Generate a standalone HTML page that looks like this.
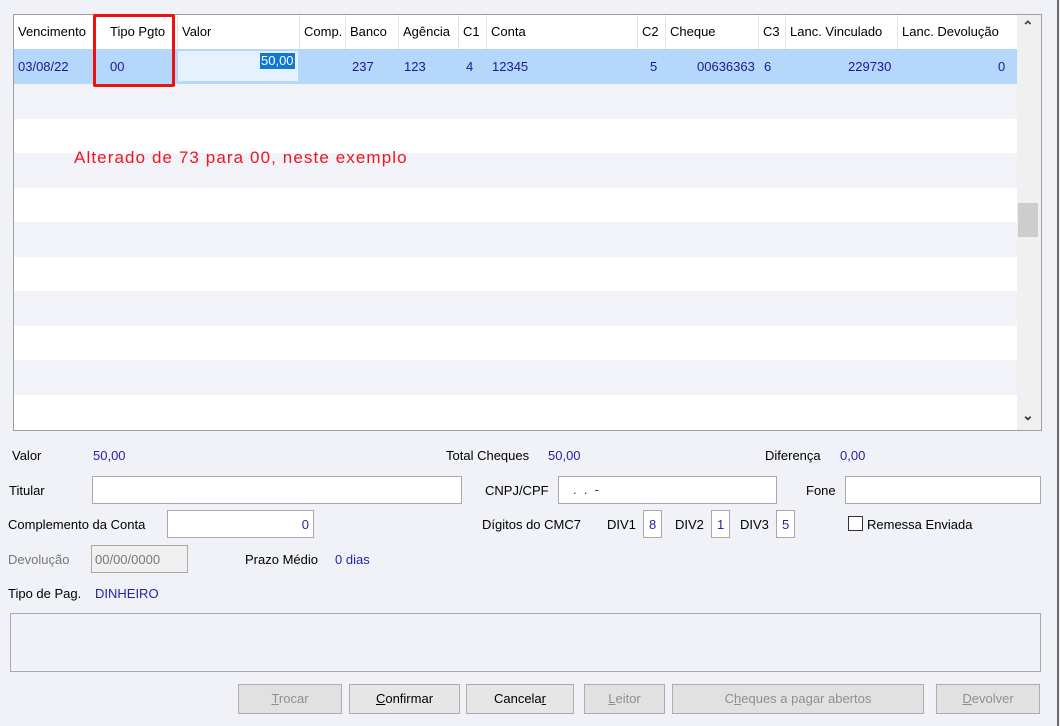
<!DOCTYPE html>
<html><head><meta charset="utf-8"><style>
*{box-sizing:border-box;margin:0;padding:0}
body{width:1060px;height:726px;background:#f0f2f7;font-family:"Liberation Sans",sans-serif;font-size:13px;color:#000;position:relative;overflow:hidden}
.a{position:absolute;white-space:nowrap}
.grid{position:absolute;left:13px;top:14px;width:1029px;height:417px;border:1px solid #a0a0a0;background:#fff;overflow:hidden}
.hd{position:absolute;top:0;height:34px;line-height:34px;border-right:1px solid #e3e3e3;padding-left:4px}
.row{position:absolute;left:0;width:1003px;height:35px}
.c{position:absolute;top:0;line-height:35px;color:#1a1a8c}
.blue{color:#2323a8}
.inp{position:absolute;background:#fff;border:1px solid #a8a8a8;height:28px}
.btn{position:absolute;top:684px;height:30px;border:1px solid #adadad;background:#e1e1e1;text-align:center;line-height:28px;color:#8f8f8f}
.btn.on{color:#000;background:#e6e6e6}
u{text-decoration:underline}
</style></head><body>
<div class="grid">
  <div class="hd" style="left:0;width:80px">Vencimento</div>
  <div class="hd" style="left:80px;width:84px;padding-left:16px">Tipo Pgto</div>
  <div class="hd" style="left:164px;width:122px">Valor</div>
  <div class="hd" style="left:286px;width:46px">Comp.</div>
  <div class="hd" style="left:332px;width:53px">Banco</div>
  <div class="hd" style="left:385px;width:60px">Agência</div>
  <div class="hd" style="left:445px;width:28px">C1</div>
  <div class="hd" style="left:473px;width:151px">Conta</div>
  <div class="hd" style="left:624px;width:28px">C2</div>
  <div class="hd" style="left:652px;width:93px">Cheque</div>
  <div class="hd" style="left:745px;width:27px">C3</div>
  <div class="hd" style="left:772px;width:112px">Lanc. Vinculado</div>
  <div class="hd" style="left:884px;width:120px">Lanc. Devolução</div>
  <div class="row" style="top:34px;background:#b5d7fb">
    <div class="c" style="left:4px">03/08/22</div>
    <div class="c" style="left:96px">00</div>
    <div style="position:absolute;left:164px;top:2px;width:120px;height:30px;background:#e5f1fd"></div>
    <div style="position:absolute;left:246px;top:4px;height:16px;line-height:16px;background:#0f78d7;color:#fff;padding:0 1px">50,00</div>
    <div class="c" style="left:338px">237</div>
    <div class="c" style="left:390px">123</div>
    <div class="c" style="left:452px">4</div>
    <div class="c" style="left:478px">12345</div>
    <div class="c" style="left:636px">5</div>
    <div class="c" style="left:683px">00636363</div>
    <div class="c" style="left:750px">6</div>
    <div class="c" style="left:834px">229730</div>
    <div class="c" style="left:984px">0</div>
  </div>
  <div class="row" style="top:69px;background:#f2f3f8"></div>
  <div class="row" style="top:138px;background:#f2f3f8"></div>
  <div class="row" style="top:207px;background:#f2f3f8"></div>
  <div class="row" style="top:276px;background:#f2f3f8"></div>
  <div class="row" style="top:345px;background:#f2f3f8"></div>
  <div class="a" style="left:60px;top:133px;color:#f0141e;font-size:17px;letter-spacing:1.1px">Alterado de 73 para 00, neste exemplo</div>
  <div style="position:absolute;left:1003px;top:0;width:24px;height:415px;background:#f0f0f0">
    <div class="a" style="left:5px;top:3px;font-size:14px;font-weight:bold;color:#444">&#8963;</div>
    <div style="position:absolute;left:1px;top:188px;width:20px;height:34px;background:#cdcdcd"></div>
    <div class="a" style="left:5px;top:392px;font-size:14px;font-weight:bold;color:#333">&#8964;</div>
  </div>
</div>
<div style="position:absolute;left:93px;top:14px;width:82px;height:73px;border:3px solid #ee1111;border-radius:2px"></div>
<div style="position:absolute;left:1057px;top:0;width:2px;height:726px;background:#6a6a6a"></div>

<div class="a" style="left:12px;top:448px">Valor</div>
<div class="a blue" style="left:93px;top:448px">50,00</div>
<div class="a" style="left:446px;top:448px">Total Cheques</div>
<div class="a blue" style="left:548px;top:448px">50,00</div>
<div class="a" style="left:765px;top:448px">Diferença</div>
<div class="a blue" style="left:840px;top:448px">0,00</div>

<div class="a" style="left:9px;top:483px">Titular</div>
<div class="inp" style="left:92px;top:476px;width:370px"></div>
<div class="a" style="left:485px;top:483px">CNPJ/CPF</div>
<div class="inp" style="left:558px;top:476px;width:219px"><span class="a blue" style="left:14px;top:5px">. &nbsp;. &nbsp;-</span></div>
<div class="a" style="left:806px;top:483px">Fone</div>
<div class="inp" style="left:845px;top:476px;width:196px"></div>

<div class="a" style="left:8px;top:517px">Complemento da Conta</div>
<div class="inp" style="left:167px;top:510px;width:147px"><span class="a blue" style="right:4px;top:6px">0</span></div>
<div class="a" style="left:482px;top:517px">Dígitos do CMC7</div>
<div class="a" style="left:607px;top:517px">DIV1</div>
<div class="inp" style="left:643px;top:510px;width:19px"><span class="a blue" style="left:5px;top:6px">8</span></div>
<div class="a" style="left:675px;top:517px">DIV2</div>
<div class="inp" style="left:711px;top:510px;width:19px"><span class="a blue" style="left:5px;top:6px">1</span></div>
<div class="a" style="left:740px;top:517px">DIV3</div>
<div class="inp" style="left:776px;top:510px;width:19px"><span class="a blue" style="left:5px;top:6px">5</span></div>
<div style="position:absolute;left:848px;top:516px;width:15px;height:15px;border:1px solid #333;background:#fff"></div>
<div class="a" style="left:867px;top:517px">Remessa Enviada</div>

<div class="a" style="left:8px;top:552px;color:#777">Devolução</div>
<div class="inp" style="left:91px;top:545px;width:97px;background:#f0f0f0"><span class="a" style="left:3px;top:6px;color:#777">00/00/0000</span></div>
<div class="a" style="left:245px;top:552px">Prazo Médio</div>
<div class="a blue" style="left:335px;top:552px">0 dias</div>

<div class="a" style="left:8px;top:586px">Tipo de Pag.</div>
<div class="a blue" style="left:95px;top:586px">DINHEIRO</div>

<div style="position:absolute;left:10px;top:613px;width:1031px;height:59px;border:1px solid #a8a8a8;background:#f0f2f7"></div>

<div class="btn" style="left:238px;width:104px"><u>T</u>rocar</div>
<div class="btn on" style="left:349px;width:111px"><u>C</u>onfirmar</div>
<div class="btn on" style="left:466px;width:108px">Cancela<u>r</u></div>
<div class="btn" style="left:584px;width:81px"><u>L</u>eitor</div>
<div class="btn" style="left:672px;width:252px">C<u>h</u>eques a pagar abertos</div>
<div class="btn" style="left:936px;width:104px"><u>D</u>evolver</div>
</body></html>
